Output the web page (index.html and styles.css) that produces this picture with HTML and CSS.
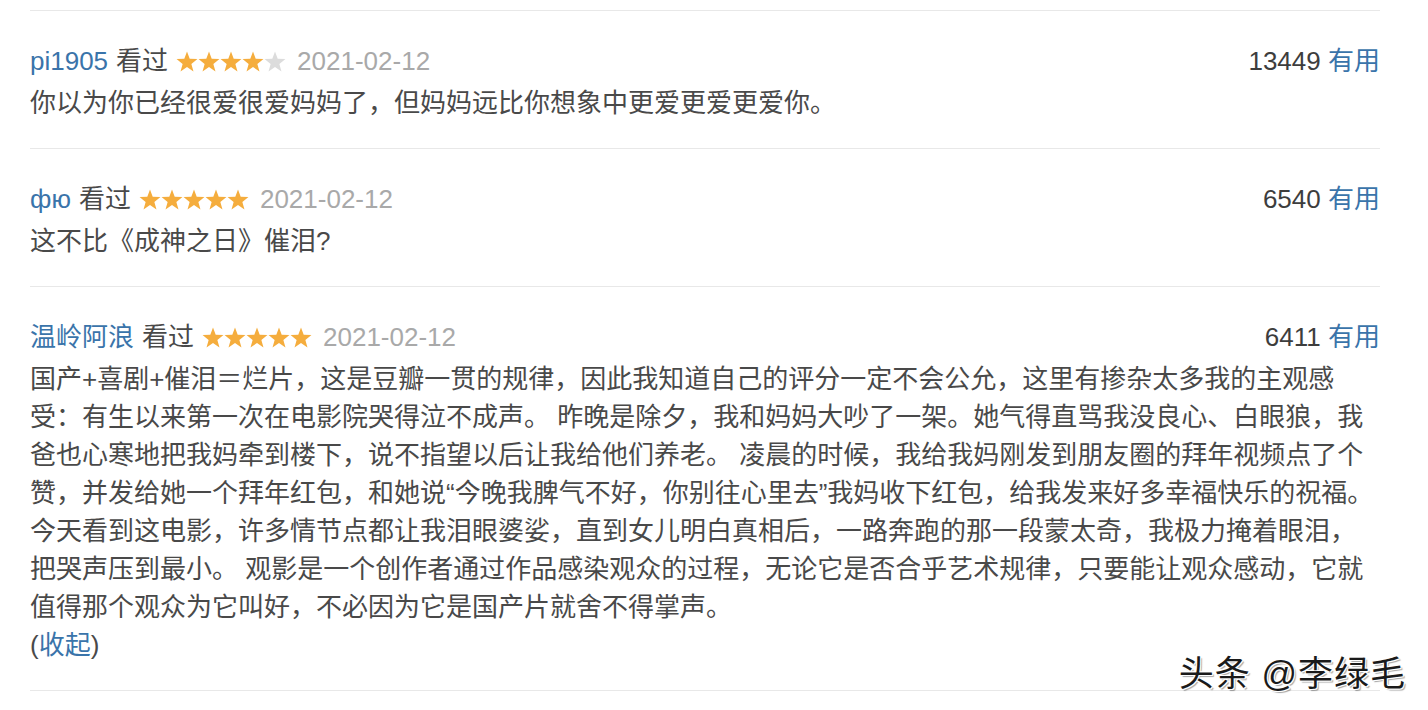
FILE: index.html
```html
<!DOCTYPE html>
<html lang="zh-CN">

<head>
    <meta charset="UTF-8">
    <meta name="viewport" content="width=device-width, initial-scale=1.0">
    <title>短评</title>
    <link rel="stylesheet" href="styles.css">
</head>

<body>
    <svg width="0" height="0" class="defs">
        <symbol id="star" viewBox="0 0 22 21">
            <polygon points="11,0.5 13.7,7.78 21.46,8.1 15.37,12.92 17.47,20.4 11,16.1 4.53,20.4 6.63,12.92 0.54,8.1 8.3,7.78" />
        </symbol>
    </svg>

    <div class="comment-list">
        <!-- comment 1 -->
        <div class="comment-item">
            <div class="comment-info">
                <div class="meta">
                    <a class="user" href="#">pi1905</a>
                    <span class="watched">看过</span>
                    <span class="rating">
                        <svg class="on"><use href="#star" /></svg><svg class="on"><use href="#star" /></svg><svg class="on"><use href="#star" /></svg><svg class="on"><use href="#star" /></svg><svg class="off"><use href="#star" /></svg>
                    </span>
                    <span class="time">2021-02-12</span>
                </div>
                <div class="votes"><span class="count">13449</span> <a href="#">有用</a></div>
            </div>
            <p class="short">你以为你已经很爱很爱妈妈了，但妈妈远比你想象中更爱更爱更爱你。</p>
        </div>

        <!-- comment 2 -->
        <div class="comment-item">
            <div class="comment-info">
                <div class="meta">
                    <a class="user" href="#">фю</a>
                    <span class="watched">看过</span>
                    <span class="rating">
                        <svg class="on"><use href="#star" /></svg><svg class="on"><use href="#star" /></svg><svg class="on"><use href="#star" /></svg><svg class="on"><use href="#star" /></svg><svg class="on"><use href="#star" /></svg>
                    </span>
                    <span class="time">2021-02-12</span>
                </div>
                <div class="votes"><span class="count">6540</span> <a href="#">有用</a></div>
            </div>
            <p class="short">这不比《成神之日》催泪?</p>
        </div>

        <!-- comment 3 -->
        <div class="comment-item">
            <div class="comment-info">
                <div class="meta">
                    <a class="user" href="#">温岭阿浪</a>
                    <span class="watched">看过</span>
                    <span class="rating">
                        <svg class="on"><use href="#star" /></svg><svg class="on"><use href="#star" /></svg><svg class="on"><use href="#star" /></svg><svg class="on"><use href="#star" /></svg><svg class="on"><use href="#star" /></svg>
                    </span>
                    <span class="time">2021-02-12</span>
                </div>
                <div class="votes"><span class="count">6411</span> <a href="#">有用</a></div>
            </div>
            <p class="short">国产+喜剧+催泪＝烂片，这是豆瓣一贯的规律，因此我知道自己的评分一定不会公允，这里有掺杂太多我的主观感<br>受：有生以来第一次在电影院哭得泣不成声。 昨晚是除夕，我和妈妈大吵了一架。她气得直骂我没良心、白眼狼，我<br>爸也心寒地把我妈牵到楼下，说不指望以后让我给他们养老。 凌晨的时候，我给我妈刚发到朋友圈的拜年视频点了个<br>赞，并发给她一个拜年红包，和她说“今晚我脾气不好，你别往心里去”我妈收下红包，给我发来好多幸福快乐的祝福。<br>今天看到这电影，许多情节点都让我泪眼婆娑，直到女儿明白真相后，一路奔跑的那一段蒙太奇，我极力掩着眼泪，<br>把哭声压到最小。 观影是一个创作者通过作品感染观众的过程，无论它是否合乎艺术规律，只要能让观众感动，它就<br>值得那个观众为它叫好，不必因为它是国产片就舍不得掌声。</p>
            <p class="fold">(<a href="#">收起</a>)</p>
        </div>
    </div>

    <div class="watermark">头条 @李绿毛</div>
</body>

</html>
```

FILE: styles.css
```css
body {
    font-family: "Liberation Sans", "Noto Sans CJK SC", sans-serif;
    margin: 0;
    padding: 0;
    background: #fff;
    color: #494949;
    font-size: 26px;
}

a {
    color: #3a74aa;
    text-decoration: none;
}

.defs {
    position: absolute;
}

.comment-list {
    margin: 10px 48px 0 30px;
    border-top: 1px solid #e8e8e8;
}

.comment-item {
    padding: 31px 0 26px;
    border-bottom: 1px solid #e8e8e8;
}

.comment-info {
    display: flex;
    justify-content: space-between;
    align-items: center;
    line-height: 38px;
    margin-bottom: 4px;
}

.meta {
    display: flex;
    align-items: center;
    gap: 8px;
}

.watched {
    color: #494949;
}

.rating {
    display: flex;
    margin-right: 3px;
}

.rating svg {
    width: 22px;
    height: 21px;
    display: block;
}

.rating .on {
    fill: #f5ad3d;
}

.rating .off {
    fill: #dcdcdc;
}

.time {
    color: #a9a9a9;
}

.votes .count {
    color: #3d3d3d;
}

.short,
.fold {
    margin: 0;
    line-height: 38px;
}

.watermark {
    position: absolute;
    right: 22px;
    top: 645px;
    font-size: 35px;
    letter-spacing: 1px;
    color: #1a1a1a;
    text-shadow: 1px 1px 0 #fff, -1px -1px 0 #fff, 1px -1px 0 #fff, -1px 1px 0 #fff, 2px 2px 1px rgba(0, 0, 0, 0.35);
}
```
